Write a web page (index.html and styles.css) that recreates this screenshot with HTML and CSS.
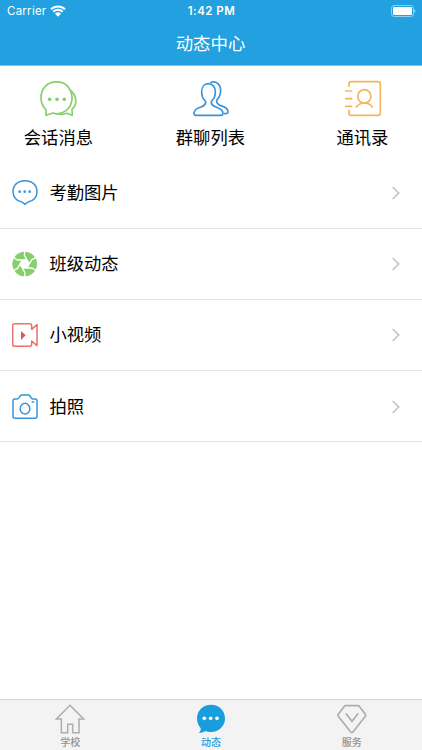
FILE: index.html
```html
<!DOCTYPE html>
<html lang="zh-CN">
    <head>
        <meta charset="UTF-8">
        <meta name="viewport" content="width=device-width, initial-scale=1">
        <title>动态中心</title>
        <link rel="stylesheet" href="styles.css">
    </head>

    <body>
        <header class="header">
            <div class="status-bar">
                <div class="carrier">
                    <span>Carrier</span>
                    <svg class="wifi" viewBox="0 0 48 36">
                        <path d="M3 13 A30 30 0 0 1 45 13" />
                        <path d="M10 20 A20 20 0 0 1 38 20" />
                        <path class="solid" d="M24 35 L15 26 A13 13 0 0 1 33 26 Z" />
                    </svg>
                </div>
                <div class="clock">1:42 PM</div>
                <div class="battery-wrap">
                    <svg class="battery" viewBox="0 0 75 36">
                        <rect class="shell" x="1.5" y="1.5" width="66" height="33" rx="8" />
                        <rect class="charge" x="6" y="6" width="57" height="24" rx="4" />
                        <path class="tip" d="M70 13 Q74 14 74 18 Q74 22 70 23 Z" />
                    </svg>
                </div>
            </div>
            <h1 class="title">动态中心</h1>
        </header>

        <nav class="shortcuts">
            <a class="shortcut">
                <svg class="shortcut-icon green" viewBox="118 30 114 112">
                    <path d="M139 136 V119 C119 102 120 68 136 50 C153 31 188 31 205 50 C223 72 221 105 199 122 C184 133 170 133 160 129 Z" />
                    <path d="M211 60 C233 76 233 105 217 118 L218 136 L201 130 C191 134 183 134 175 131" />
                    <g class="dots">
                        <circle cx="150" cy="88" r="5.5" />
                        <circle cx="172" cy="88" r="5.5" />
                        <circle cx="194" cy="88" r="5.5" />
                    </g>
                </svg>
                <span>会话消息</span>
            </a>
            <a class="shortcut">
                <svg class="shortcut-icon blue" viewBox="121 30 120 112">
                    <path d="M176 41 C164 41 156 51 156 65 C156 77 160 86 166 92 Q169 95 168 99 C167 105 162 108 154 111 C141 115 133 120 133 130 Q133 136 139 136 H214 Q220 136 220 130 C220 120 211 115 199 111 C191 108 186 105 185 99 Q184 95 187 92 C193 86 197 77 197 65 C197 51 188 41 176 41 Z" />
                    <path d="M184 37 C201 32 213 44 213 61 C213 73 209 82 203 88 Q200 91 201 95 C202 101 206 104 213 107 C227 111 235 117 235 125 Q235 132 225 131" />
                </svg>
                <span>群聊列表</span>
            </a>
            <a class="shortcut">
                <svg class="shortcut-icon orange" viewBox="96 30 120 112">
                    <path d="M117 49 V42 Q117 35 124 35 H204 Q211 35 211 42 V129 Q211 136 204 136 H124 Q117 136 117 129 V121" />
                    <path d="M107 63 H125 M107 86 H125 M107 109 H125" />
                    <circle cx="163" cy="79" r="20" />
                    <path d="M139 111 C145 103 151 99 163 99 C175 99 181 103 187 111" />
                </svg>
                <span>通讯录</span>
            </a>
        </nav>

        <main class="list">
            <a class="row">
                <svg class="row-icon blue" viewBox="36 30 78 78">
                    <path d="M66 96 C49 94 39 81 39 65 C39 45 54 32 75 32 C96 32 111 45 111 65 C111 81 101 94 84 96 L75 103 Z" />
                    <g class="dots">
                        <circle cx="59" cy="65" r="4" />
                        <circle cx="74" cy="65" r="4" />
                        <circle cx="89" cy="65" r="4" />
                    </g>
                </svg>
                <span class="row-text">考勤图片</span>
                <svg class="arrow" viewBox="0 0 24 42"><path d="M2 3 L20 21 L2 39" /></svg>
            </a>
            <a class="row">
                <svg class="row-icon" viewBox="36 33 78 78">
                    <circle class="lens" cx="74" cy="72" r="37" />
                    <path class="lens-hole" d="M67 60 L81 60 L88 72 L81 84 L67 84 L60 72 Z" />
                    <path class="blades" d="M81 60 L52 60 L41 53 M88 72 L73.5 47 L74 34 M81 84 L95.5 59 L107 53 M67 84 L96 84 L107 91 M60 72 L74.5 97 L74 110 M67 60 L52.5 85 L41 91" />
                </svg>
                <span class="row-text">班级动态</span>
                <svg class="arrow" viewBox="0 0 24 42"><path d="M2 3 L20 21 L2 39" /></svg>
            </a>
            <a class="row">
                <svg class="row-icon red" viewBox="36 36 78 78">
                    <path d="M44 41 H89 Q95 41 95 47 V58 L111 44 V107 L95 93 V103 Q95 109 89 109 H44 Q38 109 38 103 V47 Q38 41 44 41 Z" />
                    <path class="play" d="M63 63 L77 76 L63 90 Z" />
                </svg>
                <span class="row-text">小视频</span>
                <svg class="arrow" viewBox="0 0 24 42"><path d="M2 3 L20 21 L2 39" /></svg>
            </a>
            <a class="row">
                <svg class="row-icon blue" viewBox="36 27 78 78">
                    <path d="M44 42 H52 Q56 42 58 37 L60 33 Q62 30 66 30 H84 Q88 30 90 33 L93 38 Q95 42 99 42 H105 Q111 42 111 48 V94 Q111 100 105 100 H45 Q39 100 39 94 V48 Q39 42 44 42 Z" />
                    <ellipse cx="75" cy="71" rx="14.5" ry="16" />
                    <path d="M97 51 H101" />
                </svg>
                <span class="row-text">拍照</span>
                <svg class="arrow" viewBox="0 0 24 42"><path d="M2 3 L20 21 L2 39" /></svg>
            </a>
        </main>

        <footer class="tab-bar">
            <a class="tab">
                <svg class="tab-icon" viewBox="76 42 90 90">
                    <path d="M121 46 L162 87 H148 V128 H129 V103 H114 V128 H95 V87 H80 Z" />
                </svg>
                <span>学校</span>
            </a>
            <a class="tab active">
                <svg class="tab-icon" viewBox="498 42 90 90">
                    <path class="bubble" d="M543 44 C567 44 585 62 585 85 C585 109 567 126 543 126 C537 126 531 125 527 123 C520 127 513 129 506 129 C511 125 513 120 512 114 C505 107 501 96 501 85 C501 62 519 44 543 44 Z" />
                    <g class="bubble-dots">
                        <circle cx="523" cy="85" r="5.5" />
                        <circle cx="542" cy="85" r="5.5" />
                        <circle cx="561" cy="85" r="5.5" />
                    </g>
                </svg>
                <span>动态</span>
            </a>
            <a class="tab">
                <svg class="tab-icon gem" viewBox="110 42 90 90">
                    <path d="M136 47 H173 Q176 47 178 50 L195 73 Q197 76 195 79 L158 126 Q155 130 151 126 L114 79 Q112 76 114 73 L131 50 Q133 47 136 47 Z" />
                    <path d="M138 72 L155 94 L172 72" />
                </svg>
                <span>服务</span>
            </a>
        </footer>
    </body>
</html>
```
FILE: styles.css
```css
*, *::after, *::before {
    box-sizing: border-box;
}

:root {
    --main-blue: #22a0df;
    --line: #e4e4e5;
}

body {
    margin: 0;
    height: 100vh;
    display: flex;
    flex-direction: column;
    background-color: white;
    color: black;
    font-family: "Inter", "Noto Sans CJK SC", sans-serif;
}

svg {
    display: block;
    flex: none;
    fill: none;
    stroke-linecap: round;
    stroke-linejoin: round;
}

/* header */
.header {
    height: 66px;
    background-color: var(--main-blue);
    border-bottom: 1px solid #7fc4e8;
    color: white;
}

.status-bar {
    display: grid;
    grid-template-columns: 1fr auto 1fr;
    align-items: center;
    height: 22px;
    padding: 0 6px 0 7px;
    font-size: 11.5px;
}

.carrier {
    display: flex;
    align-items: center;
    gap: 4px;
    letter-spacing: .25px;
}

.wifi {
    width: 16px;
    height: 12px;
    stroke: white;
    stroke-width: 6;
    stroke-linecap: butt;
}

.wifi .solid {
    fill: white;
    stroke: none;
}

.clock {
    font-weight: 600;
    letter-spacing: .45px;
}

.battery-wrap {
    display: flex;
    justify-content: flex-end;
}

.battery {
    width: 25px;
    height: 12px;
}

.shell {
    stroke: #8fd0f0;
    stroke-width: 3;
}

.charge {
    fill: white;
}

.tip {
    fill: #8fd0f0;
}

.title {
    margin: 0;
    padding-right: 1px;
    font-size: 17.4px;
    font-weight: 400;
    line-height: 44px;
    text-align: center;
}

/* shortcuts */
.shortcuts {
    display: flex;
    justify-content: space-between;
    height: 91.5px;
    padding: 14px 24.6px 0 23.4px;
}

.shortcut {
    display: flex;
    flex-direction: column;
    align-items: center;
    width: 70px;
    font-size: 17.3px;
    line-height: 26px;
    gap: 8px;
    white-space: nowrap;
}

.shortcut-icon {
    height: 37.33px;
    stroke-width: 5;
}

.green {
    stroke: #86cf6c;
}

.green .dots {
    fill: #86cf6c;
    stroke: none;
}

.blue {
    stroke: #3895db;
}

.blue .dots {
    fill: #3895db;
    stroke: none;
}

.orange {
    stroke: #f5b55d;
}

.red {
    stroke: #e8716c;
}

/* list */
.row {
    display: flex;
    align-items: center;
    height: 71.2px;
    padding: 1px 22px 0 12px;
    border-bottom: 1px solid var(--line);
}

.row-icon {
    width: 26px;
    height: 26px;
    stroke-width: 4.5;
}

.row-text {
    flex: 1;
    margin-left: 11.4px;
    font-size: 17.3px;
    line-height: 26px;
}

.lens {
    fill: #86cf6c;
}

.lens-hole {
    fill: white;
}

.blades {
    stroke: white;
    stroke-width: 4;
}

.play {
    fill: #e05a55;
    stroke: none;
}

.arrow {
    width: 8px;
    height: 14px;
    stroke: #c4c4c7;
    stroke-width: 5;
    stroke-linecap: butt;
    stroke-linejoin: miter;
}

/* tab bar */
.tab-bar {
    display: grid;
    grid-template-columns: repeat(3, 1fr);
    height: 51px;
    margin-top: auto;
    border-top: 1px solid #d8d8d8;
    background-color: #f3f3f3;
    color: #929292;
}

.tab {
    display: flex;
    flex-direction: column;
    align-items: center;
    padding-top: 4px;
    font-size: 10px;
    font-weight: 500;
    line-height: 17px;
}

.tab-icon {
    width: 30px;
    height: 30px;
    stroke: #adadad;
    stroke-width: 4.5;
    stroke-linejoin: miter;
}

.gem {
    stroke-width: 5;
}

.active {
    color: #189ddf;
}

.bubble {
    fill: #189ddf;
    stroke: none;
}

.bubble-dots {
    fill: white;
    stroke: none;
}
```
